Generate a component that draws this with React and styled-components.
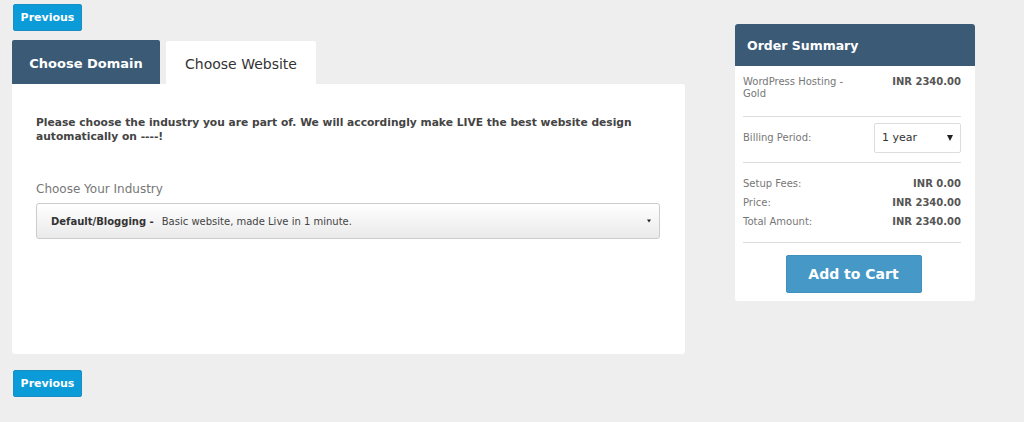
import React from "react";
import styled, { createGlobalStyle } from "styled-components";

const GlobalStyle = createGlobalStyle`
  html, body {
    margin: 0;
    padding: 0;
    background: #eeeeee;
    font-family: "DejaVu Sans", "Open Sans", sans-serif;
  }
`;

function App() {
  return (
    <>
      <GlobalStyle />
      <Page>
        <Main>
          <PrevButton>Previous</PrevButton>
          <Tabs>
            <Tab active={false}>Choose Domain</Tab>
            <Tab active>Choose Website</Tab>
          </Tabs>
          <Panel>
            <Intro>
              Please choose the industry you are part of. We will accordingly
              make LIVE the best website design automatically on ----!
            </Intro>
            <FieldLabel>Choose Your Industry</FieldLabel>
            <IndustrySelect>
              <strong>Default/Blogging -</strong>
              <span>Basic website, made Live in 1 minute.</span>
              <Caret small />
            </IndustrySelect>
          </Panel>
          <PrevButton>Previous</PrevButton>
        </Main>

        <Summary>
          <SummaryHeader>Order Summary</SummaryHeader>
          <SummaryBody>
            <Row>
              <Label>
                WordPress Hosting -<br />
                Gold
              </Label>
              <Value>INR 2340.00</Value>
            </Row>
            <Divider />
            <BillingRow>
              <Label>Billing Period:</Label>
              <PeriodSelect>
                1 year
                <Caret />
              </PeriodSelect>
            </BillingRow>
            <Divider />
            <Totals>
              <Row>
                <Label>Setup Fees:</Label>
                <Value>INR 0.00</Value>
              </Row>
              <Row>
                <Label>Price:</Label>
                <Value>INR 2340.00</Value>
              </Row>
              <Row>
                <Label>Total Amount:</Label>
                <Value>INR 2340.00</Value>
              </Row>
            </Totals>
            <Divider />
            <CartButton>Add to Cart</CartButton>
          </SummaryBody>
        </Summary>
      </Page>
    </>
  );
}

export default App;

const Page = styled.div`
  display: flex;
  align-items: flex-start;
  padding: 4px 0 0 12px;
  gap: 50px;
`;

const Main = styled.div`
  width: 673px;
  display: flex;
  flex-direction: column;
`;

const PrevButton = styled.button`
  align-self: flex-start;
  margin-left: 1px;
  width: 69px;
  height: 27px;
  border: 1px solid #1a8fc4;
  border-radius: 2px;
  background: #0b9bd8;
  color: #fff;
  font-family: inherit;
  font-weight: bold;
  font-size: 11px;
  padding: 0;
  &:last-child {
    margin-top: 16px;
  }
`;

const Tabs = styled.div`
  display: flex;
  gap: 6px;
  margin-top: 9px;
  align-items: flex-end;
`;

const Tab = styled.div`
  width: ${(p) => (p.active ? "150px" : "148px")};
  height: ${(p) => (p.active ? "43px" : "44px")};
  display: flex;
  align-items: center;
  justify-content: center;
  font-size: ${(p) => (p.active ? "14px" : "13px")};
  font-weight: ${(p) => (p.active ? "normal" : "bold")};
  color: ${(p) => (p.active ? "#333" : "#fff")};
  background: ${(p) => (p.active ? "#fff" : "#3b5a76")};
  border-radius: 2px 2px 0 0;
  padding-top: 2px;
  box-sizing: border-box;
`;

const Panel = styled.div`
  background: #fff;
  height: 270px;
  border-radius: 0 3px 3px 3px;
  padding: 32px 24px 0 24px;
  box-sizing: border-box;
`;

const Intro = styled.p`
  margin: 0;
  font-size: 10.7px;
  font-weight: bold;
  line-height: 14px;
  color: #444;
  width: 620px;
`;

const FieldLabel = styled.div`
  margin-top: 38px;
  font-size: 12px;
  color: #777;
`;

const IndustrySelect = styled.div`
  position: relative;
  margin-top: 7px;
  width: 624px;
  height: 36px;
  box-sizing: border-box;
  border: 1px solid #cccccc;
  border-radius: 3px;
  background: linear-gradient(#ffffff, #eaeaea);
  display: flex;
  align-items: center;
  padding-left: 14px;
  gap: 8px;
  font-size: 10px;
  color: #444;
  strong {
    color: #333;
  }
`;

const Caret = styled.span`
  position: absolute;
  right: ${(p) => (p.small ? "8px" : "7px")};
  top: 50%;
  transform: translateY(-50%);
  width: 0;
  height: 0;
  border-left: ${(p) => (p.small ? "2.5px" : "3.5px")} solid transparent;
  border-right: ${(p) => (p.small ? "2.5px" : "3.5px")} solid transparent;
  border-top: ${(p) => (p.small ? "3px" : "6px")} solid #222;
`;

const Summary = styled.div`
  margin-top: 20px;
  width: 240px;
  background: #fff;
  border-radius: 3px;
  overflow: hidden;
`;

const SummaryHeader = styled.div`
  height: 42px;
  background: #3b5a76;
  color: #fff;
  font-weight: bold;
  font-size: 12.5px;
  display: flex;
  align-items: center;
  padding-left: 12px;
`;

const SummaryBody = styled.div`
  padding: 10px 14px 8px 8px;
  display: flex;
  flex-direction: column;
`;

const Row = styled.div`
  display: flex;
  justify-content: space-between;
  align-items: flex-start;
  font-size: 10px;
  line-height: 12px;
`;

const BillingRow = styled(Row)`
  align-items: center;
  padding: 6px 0 9px;
`;

const Label = styled.div`
  color: #777;
`;

const Value = styled.div`
  color: #555;
  font-weight: bold;
`;

const Divider = styled.hr`
  border: none;
  border-top: 1px solid #dddddd;
  margin: 0;
  &:first-of-type {
    margin-top: 16px;
  }
`;

const PeriodSelect = styled.div`
  position: relative;
  width: 87px;
  height: 30px;
  box-sizing: border-box;
  border: 1px solid #dddddd;
  border-radius: 2px;
  display: flex;
  align-items: center;
  padding-left: 7px;
  font-size: 11px;
  color: #333;
`;

const Totals = styled.div`
  display: flex;
  flex-direction: column;
  gap: 7px;
  padding: 15px 0 14px;
`;

const CartButton = styled.button`
  align-self: center;
  margin: 12px 0 0 3px;
  width: 136px;
  height: 38px;
  border: 1px solid #3f90bd;
  border-radius: 2px;
  background: #4699c6;
  color: #fff;
  font-family: inherit;
  font-weight: bold;
  font-size: 14px;
`;
